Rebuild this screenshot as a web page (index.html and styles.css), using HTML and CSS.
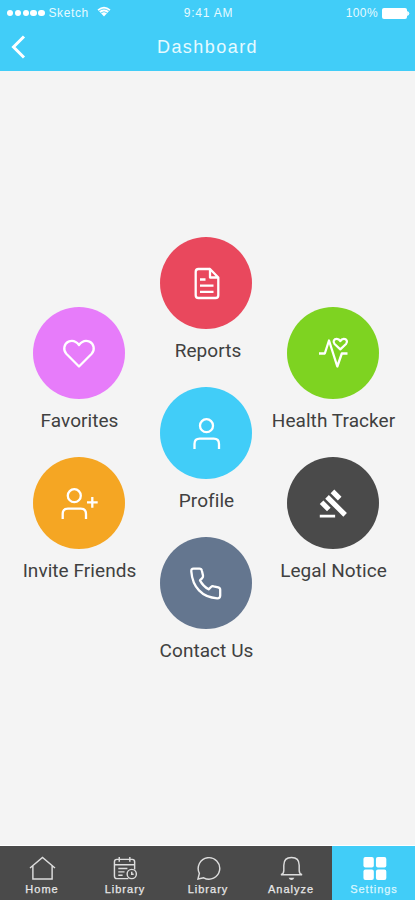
FILE: index.html
```html
<!DOCTYPE html>
<html lang="en">
<head>
<meta charset="utf-8">
<title>Dashboard</title>
<link rel="stylesheet" href="styles.css">
</head>
<body>
<div class="app">
<header class="header">
  <div class="status">
    <div class="carrier">
      <span class="signal"><i></i><i></i><i></i><i></i><i></i></span>
      <span class="network">Sketch</span>
      <svg class="wifi" width="14" height="11" viewBox="0 0 14 11"><path d="M0.5 3.5Q7-1.8 13.500 3.500L7 10.500Z" fill="#fff"/><path d="M1.900 5Q7 1 12.100 5M3.700 7Q7 4.400 10.300 7" fill="none" stroke="#41cdf8" stroke-width=".8"/></svg>
    </div>
    <span class="time">9:41 AM</span>
    <div class="power"><span class="percent">100%</span><svg width="28" height="11" viewBox="0 0 28 11"><rect width="25" height="11" rx="2" fill="#fff"/><path d="M25.700 3.500Q28 5.500 25.700 7.500Z" fill="#fff" stroke="#fff"/></svg></div>
  </div>
  <div class="titlebar">
    <svg class="back" width="16" height="26" viewBox="0 0 16 26"><path d="M13 2.500 2.500 13 13 23.500" fill="none" stroke="#fff" stroke-width="3"/></svg>
    <h1>Dashboard</h1>
  </div>
</header>
<main class="menu">
  <div class="column side">
    <a class="item"><span class="disc pink"><svg viewBox="0 0 92 92"><path d="M46 59.500 33.300 46.800C29.800 43 31 36.500 35.500 34.600C39.500 33 43.300 34.500 46 38C48.700 34.500 52.500 33 56.500 34.600C61 36.500 62.200 43 58.700 46.800Z"/></svg></span><span class="label">Favorites</span></a>
    <a class="item"><span class="disc orange"><svg viewBox="0 0 92 92"><circle cx="41.300" cy="38.700" r="6.500"/><path d="M29.700 62V57Q29.700 51.700 35 51.700H47.700Q53 51.700 53 57V62M59.300 40V50.800M54 45.400H64.700"/></svg></span><span class="label">Invite Friends</span></a>
  </div>
  <div class="column center">
    <a class="item"><span class="disc red"><svg viewBox="0 0 92 92"><path d="M50 32H38.500Q35.700 32 35.700 34.800V58.200Q35.700 61 38.500 61H55.500Q58.300 61 58.300 58.200V40.500L50 32V40.500H58.300M40 42.500H45.500M40 48.700H53.500M40 54.800H53.500"/></svg></span><span class="label reports">Reports</span></a>
    <a class="item"><span class="disc blue"><svg viewBox="0 0 92 92"><circle cx="46.500" cy="38.700" r="6.500"/><path d="M34.500 62V57Q34.500 51.700 39.800 51.700H53.700Q59 51.700 59 57V62"/></svg></span><span class="label">Profile</span></a>
    <a class="item"><span class="disc slate"><svg viewBox="0 0 92 92"><path d="M33.500 31.700H39.500Q41.500 31.700 41.900 33.700L43 38.500Q43.300 40 42.200 41.100L40 43.400Q43 49.200 48.600 52.300L51 50Q52.100 48.900 53.600 49.300L58.200 50.300Q60.200 50.800 60.200 52.800V58.500Q60.200 61.400 57.300 61.300C42 60.500 32.500 50 31.300 34.300Q31.100 31.700 33.500 31.700Z"/></svg></span><span class="label">Contact Us</span></a>
  </div>
  <div class="column side">
    <a class="item"><span class="disc green"><svg viewBox="0 0 92 92"><path d="M32 46.500H37.800L42 33.500 50.300 59.500 54.800 46.500H60.500M53.300 42.300 47.600 37C45.400 34.500 47.200 31.800 49.800 31.900Q52 32 53.300 34Q54.600 32 56.800 31.900C59.400 31.800 61.200 34.500 59 37Z"/></svg></span><span class="label">Health Tracker</span></a>
    <a class="item"><span class="disc dark"><svg viewBox="0 0 92 92"><path class="solid" transform="translate(31.500 31.300) scale(1.280)" d="M1 20.700h12v2.200H1zM5.245 8.070l2.830-2.827 14.140 14.142-2.828 2.828zM12.317 1l5.657 5.656-2.830 2.830-5.654-5.660zM3.825 9.485l5.657 5.657-2.828 2.828-5.657-5.657z"/></svg></span><span class="label">Legal Notice</span></a>
  </div>
</main>
<nav class="tabs">
  <a class="tab"><svg viewBox="0 0 28 26"><path d="M1 12.500 14 1.500 27 12.500M4 10V24H24V10"/></svg><span>Home</span></a>
  <a class="tab"><svg viewBox="0 0 28 26"><path d="M17 23.500H5Q2.500 23.500 2.500 21V6Q2.500 3.500 5 3.500H21Q23.500 3.500 23.500 6V14M2.500 9H23.500M7.500 1V6M18.500 1V6M6.500 13H16M6.500 16.500H13M6.500 20H11"/><circle cx="20.500" cy="18.700" r="4.800"/><path d="M20.500 16.300V19H22.500"/></svg><span>Library</span></a>
  <a class="tab"><svg viewBox="0 0 28 26"><path d="M3 24 4.500 18A11.200 11.200 0 1 1 9 22.700Z"/></svg><span>Library</span></a>
  <a class="tab"><svg viewBox="0 0 28 26"><path d="M3 19.500Q6 18.500 6 15V9.500Q6 1.500 14 1.500T22 9.500V15Q22 18.500 25 19.500Z"/><path class="fill" d="M11 22.500H17Q16 25 14 25T11 22.500Z"/></svg><span>Analyze</span></a>
  <a class="tab active"><svg viewBox="0 0 28 26"><g class="fill"><rect x="2.500" y="1" width="10.800" height="11" rx="2"/><rect x="15.500" y="1" width="10.800" height="11" rx="2"/><rect x="2.500" y="14" width="10.800" height="11" rx="2"/><rect x="15.500" y="14" width="10.800" height="11" rx="2"/></g></svg><span>Settings</span></a>
</nav>
</div>
</body>
</html>
```
FILE: styles.css
```css
* { box-sizing: border-box; }
body { margin: 0; background: #f4f4f4; font-family: "Liberation Sans", Arial, sans-serif; }
.app { width: 415px; height: 900px; display: flex; flex-direction: column; overflow: hidden; }
.header { height: 71px; background: #41cdf8; color: #fff; flex: none; }
.status { height: 26px; display: grid; grid-template-columns: 1fr auto 1fr; align-items: center; padding: 0 5px 0 7px; font-size: 12px; letter-spacing: .4px; color: #e6faff; }
.carrier, .power { display: flex; align-items: center; }
.power { justify-content: flex-end; gap: 4px; }
.signal { display: flex; gap: 1.400px; margin-right: 4px; }
.signal i { width: 6.400px; height: 6.400px; border-radius: 50%; background: #fff; }
.network { letter-spacing: .6px; }
.time { letter-spacing: .8px; }
.wifi { margin-left: 8px; margin-top: -4px; }
.titlebar { height: 42px; display: grid; grid-template-columns: 50px 1fr 50px; align-items: center; }
.back { margin-left: 11px; }
h1 { margin: 0; text-align: center; font-size: 18px; font-weight: 400; letter-spacing: 1.450px; line-height: 24px; color: #e6faff; }
.menu { flex: 1; display: grid; grid-template-columns: repeat(3, 127px); padding-left: 15.500px; align-items: start; }
.center { padding-top: 166.300px; }
.side { padding-top: 236px; }
.item { height: 150.100px; display: flex; flex-direction: column; align-items: center; }
.disc { width: 92px; height: 92px; border-radius: 50%; flex: none; }
.disc svg { display: block; width: 92px; height: 92px; fill: none; stroke: #fff; stroke-width: 2.300; stroke-linejoin: round; }
.disc .solid { fill: #fff; stroke: none; }
.red { background: #e9485d; }
.pink { background: #e77cfa; }
.green { background: #7ed321; }
.blue { background: #41cdf8; }
.orange { background: #f5a623; }
.dark { background: #4a4a4a; }
.slate { background: #64768f; }
.label { margin-top: 9.600px; padding-left: 1px; font: 19px/24px Roboto, sans-serif; letter-spacing: .06px; color: #404040; white-space: nowrap; }
.reports { padding-left: 4px; }
.tabs { height: 54px; flex: none; display: grid; grid-template-columns: repeat(5, 1fr); background: #4a4a4a; color: #e8e8e8; box-shadow: 0 -1px #fff; }
.tab { display: flex; flex-direction: column; align-items: center; padding: 10px 0 0 1px; font-size: 11px; letter-spacing: 1px; line-height: 14px; -webkit-text-stroke: .25px currentColor; }
.tab svg { width: 27px; height: 25px; fill: none; stroke: #ddd; stroke-width: 1.500; margin-bottom: 1px; }
.tab .fill { fill: #ddd; stroke: none; }
.active { background: #41cdf8; color: #d9f7ff; }
.active .fill { fill: #fff; }
```
